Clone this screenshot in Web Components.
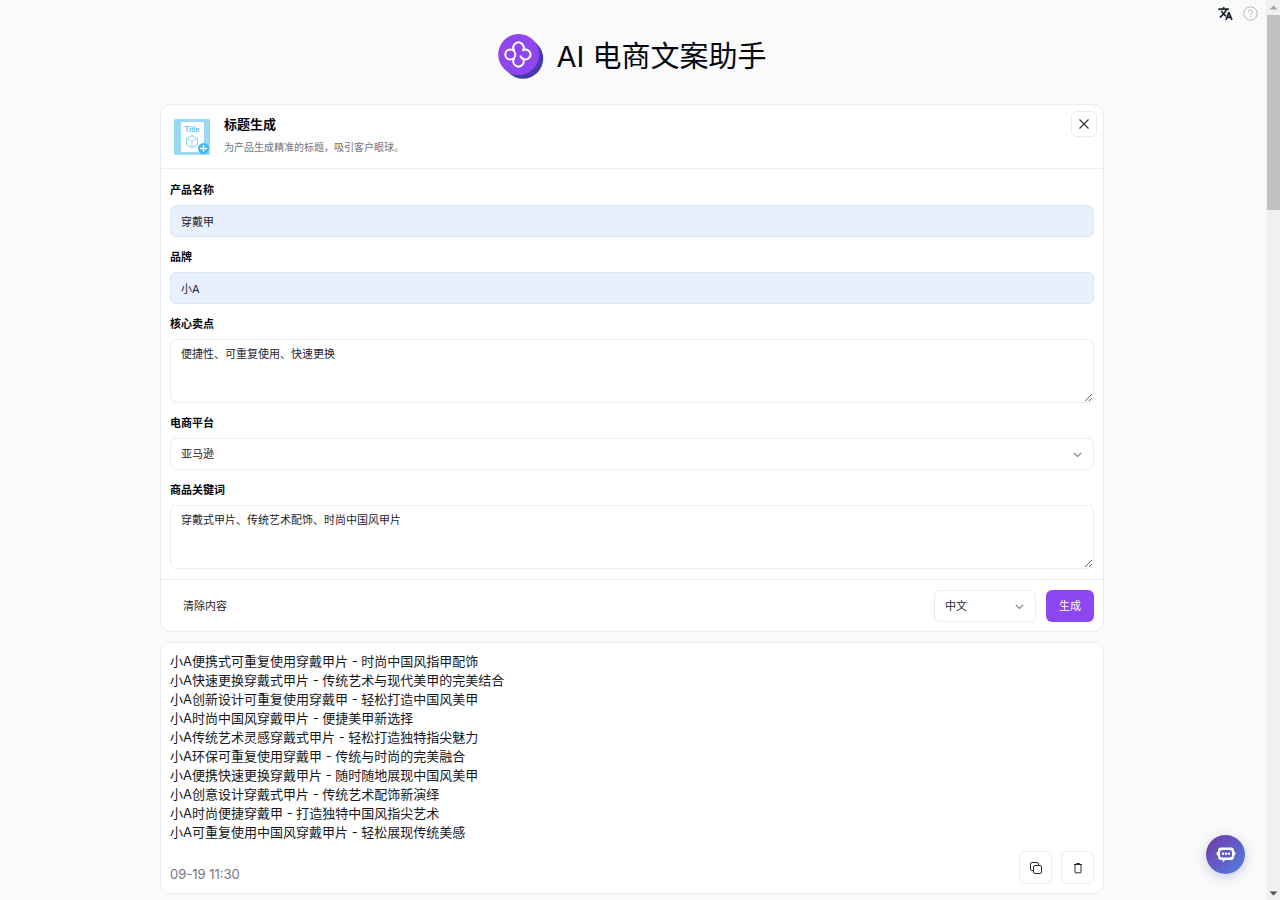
<!DOCTYPE html>
<html lang="zh-CN">
<head>
<meta charset="utf-8">
<meta name="viewport" content="width=device-width, initial-scale=1">
<title>AI 电商文案助手</title>
<style>
  :root {
    --line: #e8edf6;
    --ink: #1f2430;
    --accent: #8e47f0;
    --radius: 6px;
  }
  body {
    margin: 0;
    background: #fafafa;
    color: #030712;
    font: 11px/17px Inter, "Noto Sans CJK SC", sans-serif;
  }
</style>
</head>
<body>
<copy-app></copy-app>
<script>
const define = (name, html, setup) => {
  const template = document.createElement('template');
  template.innerHTML = html;
  customElements.define(name, class extends HTMLElement {
    constructor() {
      super();
      this.attachShadow({ mode: 'open' }).append(template.content.cloneNode(true));
    }
    connectedCallback() {
      if (setup) setup(this, this.shadowRoot);
    }
  });
};

define('app-title', `
  <style>
    :host { display: flex; justify-content: center; align-items: center; gap: 13px; }
    svg { display: block; }
    h1 { margin: 0; font-size: 29px; line-height: 46px; font-weight: 400; }
  </style>
  <svg width="46" height="46" viewBox="0 0 46 46" aria-hidden="true">
    <circle cx="25" cy="24.5" r="20.2" fill="#453cae"/>
    <circle cx="20.7" cy="20.5" r="20.5" fill="#9046ef"/>
    <g fill="none" stroke="#fff" stroke-width="2" stroke-linecap="round" stroke-linejoin="round">
      <path d="M16 16.300a5.200 5.200 0 1 1 9 0a4.900 4.900 0 1 1 0 8.400q-2-.6-2.500-2.400"/>
      <path d="M25 24.700a5.200 5.200 0 1 1-9 0"/>
      <circle cx="12.300" cy="20.500" r="5"/>
    </g>
  </svg>
  <h1><slot></slot></h1>`);

define('tool-links', `
  <style>
    :host { display: flex; justify-content: flex-end; gap: 10px; padding: 6px 6px 0 0; }
    button { display: block; padding: 0; border: 0; background: none; width: 15px; height: 15px; }
    svg { display: block; }
  </style>
  <button type="button" aria-label="语言"><svg width="15" height="15" viewBox="0 0 24 24" fill="#0b1020" stroke="#0b1020" stroke-width=".7"><path d="M12.870 15.070l-2.540-2.510.030-.030A17.520 17.520 0 0 0 14.070 6H17V4h-7V2H8v2H1v2h11.170C11.500 7.920 10.440 9.750 9 11.350 8.070 10.320 7.300 9.190 6.690 8h-2c.73 1.630 1.730 3.170 2.980 4.560l-5.090 5.020L4 19l5-5 3.110 3.110.76-2.040zM18.500 10h-2L12 22h2l1.120-3h4.750L21 22h2l-4.500-12zm-2.620 7l1.620-4.330L19.120 17h-3.240z"/></svg></button>
  <button type="button" aria-label="帮助"><svg width="15" height="15" viewBox="0 0 15 15" fill="none" stroke="#b8b8b8"><circle cx="7.500" cy="7.500" r="6.700"/><path d="M5.500 6a2 2 0 1 1 3 1.700q-1 .5-1 1.300M7.500 10.200v1.200"/></svg></button>`);

define('icon-button', `
  <style>
    :host { display: block; }
    button {
      display: grid; place-items: center; padding: 0;
      width: var(--size, 33px); height: var(--size, 33px);
      background: #fff; border: 1px solid var(--line); border-radius: var(--radius);
    }
  </style>
  <button type="button"><slot></slot></button>`,
  (host, root) => root.querySelector('button').setAttribute('aria-label', host.getAttribute('label')));

define('app-card', `
  <style>
    :host {
      display: block; box-sizing: border-box; background: #fff;
      border: 1px solid var(--line); border-radius: 10px;
    }
  </style>
  <slot></slot>`);

define('card-heading', `
  <style>
    :host {
      display: flex; align-items: flex-start; gap: 14px;
      padding: 6px 6px 13px 13px; border-bottom: 1px solid var(--line);
    }
    .art { display: block; flex: none; margin-top: 8px; }
    .text { flex: 1; padding-top: 3px; }
    h2 { margin: 0 0 5px; font-size: 13px; line-height: 20px; font-weight: 700; }
    p { margin: 0; font-size: 10px; line-height: 16px; color: #71757e; }
    icon-button { --size: 26px; }
  </style>
  <svg class="art" width="36" height="36" viewBox="0 0 36 36" aria-hidden="true">
    <rect width="36" height="36" rx="1.500" fill="#9bd8f4"/>
    <rect x="7" y="3" width="23" height="30" rx="1" fill="#fff"/>
    <text x="18" y="12.500" text-anchor="middle" font-family="Inter, sans-serif" font-size="7" font-weight="700" fill="#5cc4f2">Title</text>
    <path d="M18 16.500l5.500 2.800v6.400L18 28.700l-5.500-3v-6.400zM12.500 19.300l5.500 3 5.500-3M18 22.300v6.400" fill="none" stroke="#8fd3f4"/>
    <circle cx="29.500" cy="29.500" r="5.500" fill="#3fbdf2"/>
    <path d="M29.500 26v7M26 29.500h7" stroke="#fff" stroke-width="1.500"/>
  </svg>
  <div class="text">
    <h2><slot></slot></h2>
    <p><slot name="note"></slot></p>
  </div>
  <icon-button label="关闭"><svg width="12" height="12" viewBox="0 0 12 12" fill="none" stroke="#2b2f3a" stroke-width="1.100"><path d="M1.500 1.500l9 9M10.500 1.500l-9 9"/></svg></icon-button>`);

const controlStyle = `
  input, textarea, select {
    display: block; box-sizing: border-box; width: 100%; height: 32px; margin: 0;
    padding: 0 10px; font: inherit; color: var(--ink); background: #fff;
    border: 1px solid var(--line); border-radius: var(--radius); appearance: none; outline: none;
  }
  .pick { display: grid; align-items: center; }
  .pick > * { grid-area: 1 / 1; }
  .pick svg { justify-self: end; margin-right: 12px; pointer-events: none; }
`;
const chevron = `<svg width="9" height="9" viewBox="0 0 9 9" fill="none" stroke="#777b84" stroke-width="1.100"><path d="M.8 2.800l3.700 3.700 3.700-3.700"/></svg>`;

define('form-field', `
  <style>
    :host { display: flex; flex-direction: column; gap: 5px; }
    label { font-weight: 700; line-height: 20px; }
    ${controlStyle}
    input { background: #e8effd; border-color: #dfe6f5; }
    textarea { height: 64px; padding: 6px 10px; resize: vertical; }
  </style>
  <label for="control"></label>
  <div class="pick"></div>`,
  (host, root) => {
    root.querySelector('label').textContent = host.getAttribute('label');
    const kind = host.getAttribute('kind');
    const value = host.getAttribute('value');
    const control = document.createElement(kind);
    control.id = 'control';
    const box = root.querySelector('.pick');
    if (kind === 'select') {
      control.add(new Option(value));
      box.innerHTML = chevron;
      box.prepend(control);
    } else {
      control.value = value;
      if (kind === 'textarea') control.textContent = value;
      box.append(control);
    }
  });

define('form-actions', `
  <style>
    :host { display: flex; align-items: center; gap: 10px; padding: 10px 9px 9px; border-top: 1px solid var(--line); }
    button { height: 32px; padding: 0 13px; font: inherit; border: 0; border-radius: var(--radius); background: none; color: var(--ink); }
    .go { background: var(--accent); color: #fff; }
    .pick { margin-left: auto; width: 102px; }
    ${controlStyle}
  </style>
  <button type="button">清除内容</button>
  <div class="pick"><select aria-label="输出语言"><option>中文</option></select>${chevron}</div>
  <button type="submit" class="go">生成</button>`);

define('copy-form', `
  <style>
    :host { display: block; }
    form { margin: 0; }
    .fields { display: flex; flex-direction: column; gap: 10px; padding: 11px 9px 10px; }
  </style>
  <form>
    <card-heading>标题生成<span slot="note">为产品生成精准的标题，吸引客户眼球。</span></card-heading>
    <div class="fields">
      <form-field kind="input" label="产品名称" value="穿戴甲"></form-field>
      <form-field kind="input" label="品牌" value="小A"></form-field>
      <form-field kind="textarea" label="核心卖点" value="便捷性、可重复使用、快速更换"></form-field>
      <form-field kind="select" label="电商平台" value="亚马逊"></form-field>
      <form-field kind="textarea" label="商品关键词" value="穿戴式甲片、传统艺术配饰、时尚中国风甲片"></form-field>
    </div>
    <form-actions></form-actions>
  </form>`);

define('result-list', `
  <style>
    :host { display: block; padding: 9px; }
    ul { list-style: none; margin: 0; padding: 0; font-size: 13px; line-height: 19px; color: #16181d; }
    footer { display: flex; gap: 9px; align-items: flex-end; padding-top: 9px; }
    time { flex: 1; font-size: 13px; line-height: 20px; color: #71757e; }
  </style>
  <ul>
    <li>小A便携式可重复使用穿戴甲片 - 时尚中国风指甲配饰</li>
    <li>小A快速更换穿戴式甲片 - 传统艺术与现代美甲的完美结合</li>
    <li>小A创新设计可重复使用穿戴甲 - 轻松打造中国风美甲</li>
    <li>小A时尚中国风穿戴甲片 - 便捷美甲新选择</li>
    <li>小A传统艺术灵感穿戴式甲片 - 轻松打造独特指尖魅力</li>
    <li>小A环保可重复使用穿戴甲 - 传统与时尚的完美融合</li>
    <li>小A便携快速更换穿戴甲片 - 随时随地展现中国风美甲</li>
    <li>小A创意设计穿戴式甲片 - 传统艺术配饰新演绎</li>
    <li>小A时尚便捷穿戴甲 - 打造独特中国风指尖艺术</li>
    <li>小A可重复使用中国风穿戴甲片 - 轻松展现传统美感</li>
  </ul>
  <footer>
    <time>09-19 11:30</time>
    <icon-button label="复制"><svg width="12" height="12" viewBox="0 0 12 12" fill="none" stroke="#2b2d33"><rect x="3.500" y="3.500" width="8" height="8" rx="1.500"/><path d="M3.500 8.500H2A1.500 1.500 0 0 1 .5 7V2A1.500 1.500 0 0 1 2 .5h5A1.500 1.500 0 0 1 8.500 2v1.500"/></svg></icon-button>
    <icon-button label="删除"><svg width="12" height="12" viewBox="0 0 12 12" fill="none" stroke="#2b2d33"><path d="M2 2.500h8M4.500 2.500v-1h3v1M3 2.500v7.500q0 .8.800.8h4.400q.8 0 .8-.8V2.500"/></svg></icon-button>
  </footer>`);

define('chat-launcher', `
  <style>
    :host { display: block; position: fixed; right: 35px; bottom: 26px; }
    button {
      display: grid; place-items: center; width: 39px; height: 39px; padding: 0; border: 0; border-radius: 50%;
      background: linear-gradient(135deg, #7435a5, #4f83e6); box-shadow: 0 3px 12px #3c50a040;
    }
  </style>
  <button type="button" aria-label="聊天"><svg width="20" height="18" viewBox="0 0 20 18">
    <path d="M5 1.500h10a3 3 0 0 1 3 3v.8q1.500.2 1.500 2.200T18 9.700v1.300a3 3 0 0 1-3 3H9.500L6.500 16.500 7 14H5a3 3 0 0 1-3-3V9.700Q.5 9.500.5 7.500T2 5.300v-.8a3 3 0 0 1 3-3z" fill="#fff"/>
    <rect x="4" y="4" width="12" height="7.500" rx="2.500" fill="#6259c4"/>
    <g fill="#fff"><circle cx="7" cy="7.700" r="1.200"/><circle cx="10" cy="7.700" r="1.200"/><circle cx="13" cy="7.700" r="1.200"/></g>
  </svg></button>`);

define('scroll-rail', `
  <style>
    :host {
      display: flex; flex-direction: column; flex: none; align-items: center; position: sticky; top: 0;
      box-sizing: border-box; width: 14px; height: 100vh; background: #f1f1f1;
    }
    svg { display: block; flex: none; }
    .track { flex: 1; width: 100%; }
    .thumb { height: 22.4%; margin-left: 1px; background: #c1c1c1; }
  </style>
  <svg width="14" height="15" viewBox="0 0 14 15"><path d="M3.500 9.500l4-4 4 4z" fill="#a3a3a3"/></svg>
  <div class="track"><div class="thumb"></div></div>
  <svg width="14" height="15" viewBox="0 0 14 15"><path d="M3.500 6.500l4 4 4-4z" fill="#505050"/></svg>`);

define('copy-app', `
  <style>
    :host { display: flex; align-items: flex-start; }
    .page { flex: 1; min-width: 0; padding-right: 2px; }
    app-title { padding: 13px 0 24px; }
    main { display: flex; flex-direction: column; gap: 10px; max-width: 944px; margin: 0 auto; padding-bottom: 6px; }
  </style>
  <div class="page">
    <tool-links></tool-links>
    <app-title>AI 电商文案助手</app-title>
    <main>
      <app-card><copy-form></copy-form></app-card>
      <app-card><result-list></result-list></app-card>
    </main>
  </div>
  <scroll-rail></scroll-rail>
  <chat-launcher></chat-launcher>`);
</script>
</body>
</html>
